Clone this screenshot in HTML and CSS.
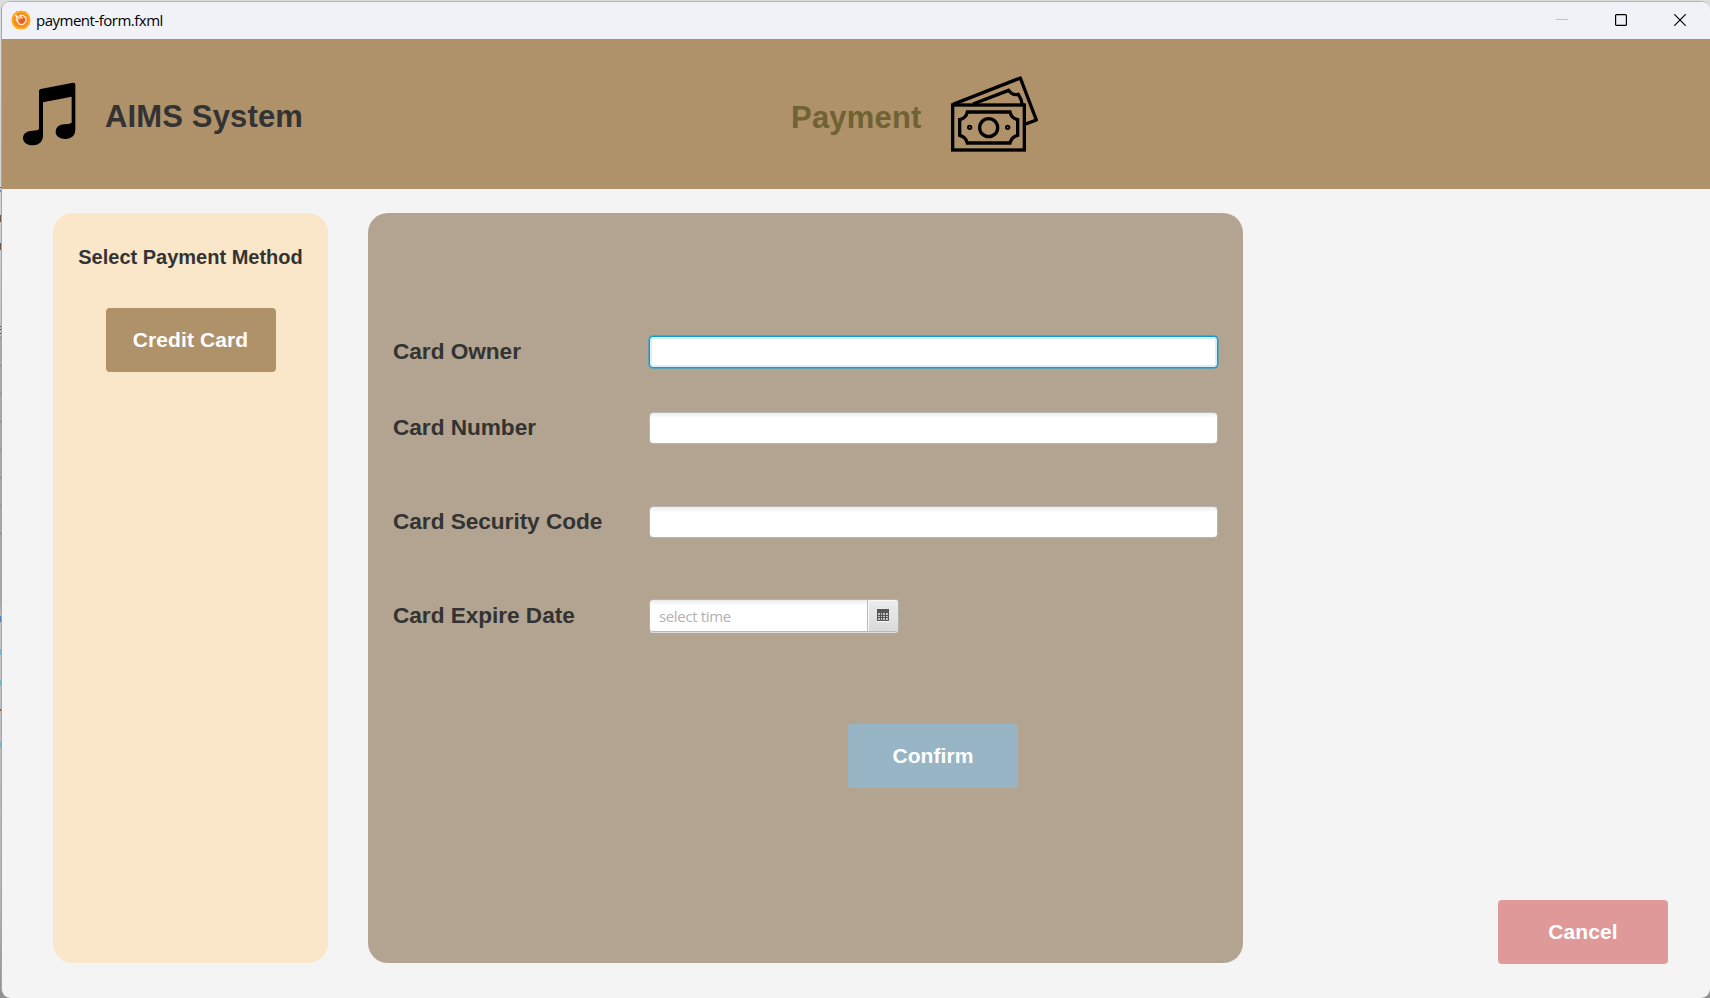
FILE: index.html
```html
<!DOCTYPE html>
<html lang="en">
<head>
<meta charset="utf-8">
<title>payment-form.fxml</title>
<link rel="stylesheet" href="styles.css">
</head>
<body>
<div class="window">
  <div class="titlebar">
    <svg class="app-icon" width="20" height="20" viewBox="0 0 20 20">
      <circle cx="10" cy="10" r="9.600" fill="#fba51a"/>
      <path d="M5.500 1.500h9l4.200 8.500-4.200 8.500h-9L1.300 10z" fill="#f9b024" stroke="#f9b024" stroke-width="1" stroke-linejoin="round"/>
      <circle cx="10" cy="10" r="7.600" fill="#fa861e"/>
      <circle cx="11" cy="10.500" r="3" fill="#ee5a24"/>
      <path d="M4.700 5.200L9 8.500M4.700 5.200L6.800 10.500M5 9.500L7 12.500Q8.500 15.500 12 14.500L15 11.500V7.500L12 5.200L8.500 5.500L11 8" fill="none" stroke="#fff0dc" stroke-width="1.200" stroke-linecap="round" stroke-linejoin="round"/>
    </svg>
    <span class="title">payment-form.fxml</span>
    <div class="controls">
      <svg width="12" height="12" viewBox="0 0 12 12"><path d="M0 5.500H12" stroke="#bfc0c4"/></svg>
      <svg width="12" height="12" viewBox="0 0 12 12"><rect x=".6" y=".6" width="10.800" height="10.800" rx="1" fill="none" stroke="#000" stroke-width="1.200"/></svg>
      <svg width="12" height="12" viewBox="0 0 12 12"><path d="M.3 .3L11.700 11.700M11.700 .3L.3 11.700" stroke="#000" stroke-width="1.200"/></svg>
    </div>
  </div>
  <div class="header">
    <svg class="note" width="54" height="64" viewBox="66 246 162 192">
      <path d="M117 273Q117 268 122 267L219 248Q226 247 226 254V388C226 408 214 417 196 417C179 417 167 408 167 396C167 382 178 373 194 373Q208 373 215 368V290L129 307V406C129 426 117 436 98 436C81 436 69 427 69 414C69 401 81 392 97 392Q112 392 117 388Z"/>
    </svg>
    <span class="brand">AIMS System</span>
    <span class="page-name">Payment</span>
    <svg class="cash" width="90" height="78" viewBox="510 46 270 234" fill="none" stroke="#000" stroke-width="10">
      <path d="M519 131L721 52L769 178L737 190" stroke-linejoin="round"/>
      <path d="M579 130L686 89Q697 105 715 101Q726 117 727 133"/>
      <rect x="518" y="133" width="215" height="135"/>
      <path d="M562 154H690Q694 173 713 177V224Q694 229 690 247H562Q558 229 539 224V177Q558 173 562 154Z"/>
      <circle cx="626" cy="201" r="27"/>
      <circle cx="569" cy="200" r="5" stroke-width="6"/>
      <circle cx="683" cy="200" r="5" stroke-width="6"/>
    </svg>
  </div>
  <div class="content">
    <div class="methods">
      <h2 class="methods-title">Select Payment Method</h2>
      <button class="btn btn-card">Credit Card</button>
    </div>
    <div class="form">
      <div class="row row-focus"><label class="label">Card Owner</label><input class="field field-focus"></div>
      <div class="row"><label class="label">Card Number</label><input class="field"></div>
      <div class="row"><label class="label">Card Security Code</label><input class="field"></div>
      <div class="row row-date"><label class="label">Card Expire Date</label>
        <div class="date">
          <span class="date-text">select time</span>
          <span class="date-btn">
            <svg width="12" height="13" viewBox="0 0 12 13" shape-rendering="crispEdges">
              <path d="M0 0H12V12H0z" fill="#555"/>
              <path d="M1 4h2v2H1zM4 4h1v2H4zM6 4h2v2H6zM9 4h2v2H9zM1 7h2v1H1zM4 7h1v1H4zM6 7h2v1H6zM9 7h2v1H9zM1 9h2v2H1zM4 9h1v2H4zM6 9h2v2H6zM9 9h2v2H9z" fill="#c4c4c4"/>
              <path d="M0 12H12V13H0z" fill="#fafafa"/>
            </svg>
          </span>
        </div>
      </div>
      <button class="btn btn-confirm">Confirm</button>
    </div>
    <button class="btn btn-cancel">Cancel</button>
  </div>
</div>
</body>
</html>
```
FILE: styles.css
```css
* { box-sizing: border-box; }
body {
  margin: 0;
  height: 998px;
  overflow: hidden;
  padding: 1px 0 0 1px;
  font-family: "Liberation Sans", Arial, sans-serif;
  color: #333;
  background:
    linear-gradient(#555, #555) 0 187px / 2px 1px no-repeat,
    linear-gradient(#6d93ae, #6d93ae) 0 190px / 2px 2px no-repeat,
    linear-gradient(#6d5a48, #6d5a48) 0 215px / 2px 7px no-repeat,
    linear-gradient(#6d5a48, #6d5a48) 0 243px / 2px 7px no-repeat,
    linear-gradient(#444, #444) 0 326px / 2px 1px no-repeat,
    linear-gradient(#444, #444) 0 329px / 2px 1px no-repeat,
    linear-gradient(#444, #444) 0 333px / 2px 1px no-repeat,
    linear-gradient(#4d84c0, #4d84c0) 0 616px / 2px 6px no-repeat,
    linear-gradient(#79b4ca, #79b4ca) 0 649px / 2px 6px no-repeat,
    linear-gradient(#79b4ca, #79b4ca) 0 680px / 2px 6px no-repeat,
    linear-gradient(#8a5a3c, #8a5a3c) 0 709px / 2px 2px no-repeat,
    linear-gradient(#79b4ca, #79b4ca) 0 742px / 2px 6px no-repeat,
    repeating-linear-gradient(#777 0 1px, transparent 1px 28px) 0 337px / 2px 197px no-repeat,
    linear-gradient(180deg, #dcdddd 0, #d2d3d4 185px, #c6c6c6 335px, #a9a9a9 337px, #a5a5a5 600px, #c6c6c6 620px, #b5b5b5 900px, #909090 998px);
}
.window {
  height: 997px;
  width: 1709px;
  display: flex;
  flex-direction: column;
  border-top: 1px solid #b2b3b3;
  border-left: 1px solid #a6a6a6;
  border-radius: 9px;
  overflow: hidden;
  background: #f4f4f4;
}
.titlebar {
  flex: none;
  height: 37px;
  display: flex;
  align-items: center;
  padding: 0 24px 0 9px;
  background: #f1f2f8;
}
.app-icon { margin-top: -1px; }
.title {
  margin: -2px 0 0 5px;
  font: 15px "Open Sans", "Noto Sans", sans-serif;
  letter-spacing: -.5px;
  color: #000;
}
.controls { display: flex; gap: 47px; margin-left: auto; margin-top: -2px; }
.header {
  flex: none;
  height: 150px;
  display: flex;
  align-items: flex-start;
  background: #af916a;
}
.header span { font-size: 31px; font-weight: bold; line-height: 36px; }
.note { margin: 43px 0 0 20px; }
.brand { width: 686px; margin: 60px 0 0 29px; letter-spacing: .15px; }
.header .page-name { width: 159px; margin-top: 61px; color: #6f6233; letter-spacing: .2px; }
.cash { margin-top: 37px; }
.content {
  flex: 1;
  display: flex;
  align-items: flex-start;
  padding: 24px 42px 0 51px;
}
.methods {
  width: 275px;
  height: 750px;
  display: flex;
  flex-direction: column;
  align-items: center;
  border-radius: 20px;
  background: #fae6c8;
}
.methods-title { margin: 33px 0 39px; font-size: 20px; line-height: 23px; }
.form {
  width: 875px;
  height: 750px;
  margin-left: 40px;
  padding: 122px 25px 0;
  border-radius: 20px;
  background: #b2a490;
}
.row { display: flex; align-items: center; height: 33px; margin-bottom: 61px; }
.row-focus { margin-bottom: 43px; }
.row-date { margin-bottom: 92px; }
.label { width: 256px; margin-top: -2px; font-size: 22.67px; font-weight: bold; line-height: 26px; letter-spacing: -.05px; }
.field {
  width: 569px;
  height: 32px;
  padding: 0 10px;
  border: 1px solid #b9b6b4;
  border-radius: 4px;
  outline: none;
  background: linear-gradient(#ededed, #fff 5px);
}
.field-focus {
  border-color: #0f9bcf;
  box-shadow: 0 0 0 .5px #0f9bcf, inset 0 0 0 2px #d9f0f8;
  background: #fff;
}
.date {
  width: 250px;
  height: 34px;
  margin-top: 1px;
  display: flex;
  border: 1px solid #b5b1ae;
  border-bottom-color: #dedcda;
  border-radius: 4px;
  overflow: hidden;
  background: linear-gradient(#ebebeb, #fff 6px);
  box-shadow: inset 0 -1px #b9b8b7;
}
.date-text {
  flex: 1;
  padding-left: 9px;
  font: 15px/32px "Open Sans", "Noto Sans", sans-serif;
  letter-spacing: -.35px;
  color: #b1b1b1;
}
.date-btn {
  width: 31px;
  height: 31px;
  display: flex;
  align-items: center;
  justify-content: center;
  border-left: 1px solid #bcbcbc;
  box-shadow: inset 1px 1px #f8f8f8;
  background: linear-gradient(#ececec, #dadada);
}
.btn {
  display: block;
  width: 170px;
  height: 64px;
  padding: 0;
  border: 0;
  border-radius: 4px;
  font: bold 21px "Liberation Sans", Arial, sans-serif;
  letter-spacing: .1px;
  color: #fff;
}
.btn-card { background: #af916a; }
.btn-confirm { margin-left: 455px; background: #97b5c5; }
.btn-cancel { margin: 687px 0 0 auto; background: #e09999; }
```
